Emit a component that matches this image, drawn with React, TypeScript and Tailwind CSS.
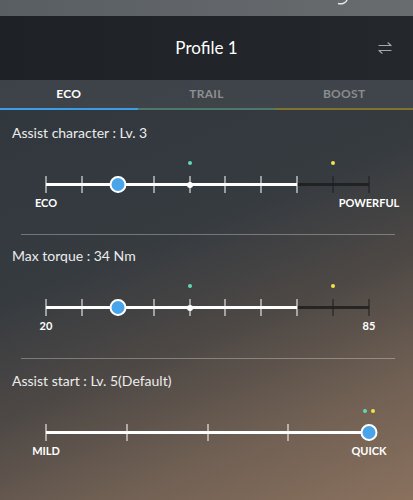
import React from "react";

type Dot = { pos: number; color: string; dx?: number };
type SliderProps = {
  ticks: number;
  value: number;
  activeUntil: number;
  whiteDot?: number;
  dots: Dot[];
  left: string;
  right: string;
};

function Slider({ ticks, value, activeUntil, whiteDot, dots, left, right }: SliderProps) {
  const n = ticks - 1;
  const pct = (i: number) => `${(i / n) * 100}%`;
  return (
    <div className="relative ml-[46px] w-[323px] h-[70px]">
      <div className="absolute left-0 right-0 top-[40px] h-[3px] bg-[#1c1c1c]/80" />
      <div
        className="absolute left-0 top-[40px] h-[3px] bg-white"
        style={{ width: pct(activeUntil) }}
      />
      {Array.from({ length: ticks }).map((_, i) => (
        <div
          key={i}
          className={`absolute top-[33px] h-[17px] w-px -translate-x-1/2 ${
            i <= activeUntil ? "bg-white" : "bg-[#1c1c1c]"
          }`}
          style={{ left: pct(i) }}
        />
      ))}
      {whiteDot !== undefined && (
        <div
          className="absolute top-[38.5px] h-[6px] w-[6px] -translate-x-1/2 rounded-full bg-white"
          style={{ left: pct(whiteDot) }}
        />
      )}
      {dots.map((d, i) => (
        <div
          key={i}
          className="absolute top-[18px] h-[4px] w-[4px] -translate-x-1/2 rounded-full"
          style={{ left: `calc(${pct(d.pos)} + ${d.dx ?? 0}px)`, backgroundColor: d.color }}
        />
      ))}
      <div
        className="absolute top-[33px] h-[17px] w-[17px] -translate-x-1/2 rounded-full border-2 border-white bg-[#4aa4ea]"
        style={{ left: pct(value) }}
      />
      <div className="absolute left-0 top-[52px] -translate-x-1/2 text-[11px] font-bold leading-[16px] text-white">
        {left}
      </div>
      <div className="absolute left-full top-[52px] -translate-x-1/2 text-[11px] font-bold leading-[16px] text-white">
        {right}
      </div>
    </div>
  );
}

function SwapIcon() {
  return (
    <svg width="14" height="12" viewBox="0 0 14 12" fill="none" stroke="#a4a7aa" strokeWidth="1.2" strokeLinecap="round" strokeLinejoin="round">
      <path d="M1 3.5H13M10 0.8L13 3.5" />
      <path d="M13 8.5H1M4 11.2L1 8.5" />
    </svg>
  );
}

const TEAL = "#62d8b6";
const YELLOW = "#f3e24b";

export default function App() {
  return (
    <div
      className="w-[413px] h-[500px] overflow-hidden flex flex-col text-white"
      style={{ fontFamily: "Lato, 'Noto Sans', sans-serif" }}
    >
      {/* top strip */}
      <div className="h-4 shrink-0 overflow-hidden bg-[linear-gradient(90deg,#595e62,#686c6f)] relative">
        <div className="flex justify-center -mt-[16px] text-[18px] leading-[18px] text-white/90">
          <span className="ml-[-2px]">Assist customize</span>
        </div>
        <svg className="absolute left-[336px] top-0" width="12" height="5" viewBox="0 0 12 5" fill="none" stroke="#e6e6e6" strokeWidth="1.5">
          <path d="M11 0C10 3 6 4.5 2 3.5" />
        </svg>
      </div>
      {/* title bar */}
      <div className="h-16 shrink-0 bg-[linear-gradient(90deg,#1e2226,#24282c)] flex items-center justify-center relative">
        <div className="text-[17px] text-white">Profile 1</div>
        <div className="absolute right-[21px] top-[26px]">
          <SwapIcon />
        </div>
      </div>
      {/* content */}
      <div className="flex-1 flex flex-col bg-[linear-gradient(158deg,#30373d_0%,#363b40_38%,#4d4845_58%,#6f5f53_78%,#8a715e_100%)]">
        {/* tabs */}
        <div className="grid grid-cols-3 h-[30px] bg-white/[0.06]">
          <div className="flex flex-col">
            <div className="flex-1 flex items-center justify-center text-[12px] font-bold text-white tracking-[0.3px]">ECO</div>
            <div className="h-[2px] bg-[#3b9de6]" />
          </div>
          <div className="flex flex-col">
            <div className="flex-1 flex items-center justify-center text-[12px] font-bold text-[#8b8f92] tracking-[0.3px]">TRAIL</div>
            <div className="h-[2px] bg-[#4b7a6c]" />
          </div>
          <div className="flex flex-col">
            <div className="flex-1 flex items-center justify-center text-[12px] font-bold text-[#8b8d8e] tracking-[0.3px]">BOOST</div>
            <div className="h-[2px] bg-[#7d7431]" />
          </div>
        </div>

        <div className="pt-[13px]">
          <div className="pl-3 text-[14px] leading-5 text-[#ececec]">Assist character : Lv. 3</div>
          <Slider
            ticks={10}
            value={2}
            activeUntil={7}
            whiteDot={4}
            dots={[
              { pos: 4, color: TEAL },
              { pos: 8, color: YELLOW },
            ]}
            left="ECO"
            right="POWERFUL"
          />
        </div>
        <div className="mt-[21px] ml-[21px] mr-[18px] h-px bg-white/30" />

        <div className="pt-[11px]">
          <div className="pl-3 text-[14px] leading-5 text-[#ececec]">Max torque : 34 Nm</div>
          <Slider
            ticks={10}
            value={2}
            activeUntil={7}
            whiteDot={4}
            dots={[
              { pos: 4, color: TEAL },
              { pos: 8, color: YELLOW },
            ]}
            left="20"
            right="85"
          />
        </div>
        <div className="mt-[22px] ml-[21px] mr-[18px] h-px bg-white/30" />

        <div className="pt-[12px]">
          <div className="pl-3 text-[14px] leading-5 text-[#ececec]">Assist start : Lv. 5(Default)</div>
          <Slider
            ticks={5}
            value={4}
            activeUntil={4}
            dots={[
              { pos: 4, color: TEAL, dx: -4 },
              { pos: 4, color: YELLOW, dx: 4 },
            ]}
            left="MILD"
            right="QUICK"
          />
        </div>
      </div>
    </div>
  );
}
